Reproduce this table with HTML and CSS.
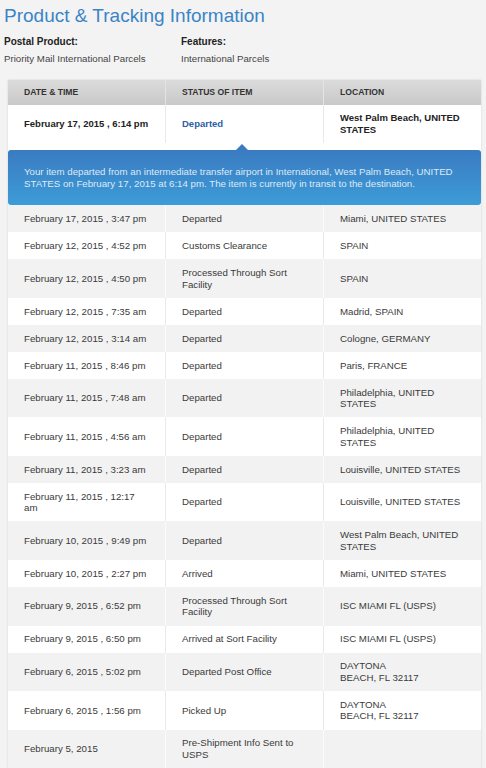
FILE: index.html
```html
<!DOCTYPE html>
<html>
<head>
<meta charset="utf-8">
<title>Product &amp; Tracking Information</title>
<link rel="stylesheet" href="styles.css">
</head>
<body>
<h1 class="title">Product &amp; Tracking Information</h1>
<div class="info">
  <div class="info-col">
    <div class="info-label">Postal Product:</div>
    <div class="info-value">Priority Mail International Parcels</div>
  </div>
  <div class="info-col">
    <div class="info-label">Features:</div>
    <div class="info-value">International Parcels</div>
  </div>
</div>
<table class="track">
  <colgroup><col class="c1"><col class="c2"><col class="c3"></colgroup>
  <thead>
    <tr><th>DATE &amp; TIME</th><th>STATUS OF ITEM</th><th>LOCATION</th></tr>
  </thead>
  <tbody class="current">
    <tr class="latest"><td>February 17, 2015 , 6:14 pm</td><td class="status">Departed</td><td>West Palm Beach, UNITED STATES</td></tr>
    <tr class="detail-row"><td colspan="3"><div class="detail"><span class="caret"></span>Your item departed from an intermediate transfer airport in International, West Palm Beach, UNITED STATES on February 17, 2015 at 6:14 pm. The item is currently in transit to the destination.</div></td></tr>
  </tbody>
  <tbody class="history">
    <tr><td>February 17, 2015 , 3:47 pm</td><td>Departed</td><td>Miami, UNITED STATES</td></tr>
    <tr><td>February 12, 2015 , 4:52 pm</td><td>Customs Clearance</td><td>SPAIN</td></tr>
    <tr><td>February 12, 2015 , 4:50 pm</td><td>Processed Through Sort Facility</td><td>SPAIN</td></tr>
    <tr><td>February 12, 2015 , 7:35 am</td><td>Departed</td><td>Madrid, SPAIN</td></tr>
    <tr><td>February 12, 2015 , 3:14 am</td><td>Departed</td><td>Cologne, GERMANY</td></tr>
    <tr><td>February 11, 2015 , 8:46 pm</td><td>Departed</td><td>Paris, FRANCE</td></tr>
    <tr><td>February 11, 2015 , 7:48 am</td><td>Departed</td><td>Philadelphia, UNITED STATES</td></tr>
    <tr><td>February 11, 2015 , 4:56 am</td><td>Departed</td><td>Philadelphia, UNITED STATES</td></tr>
    <tr><td>February 11, 2015 , 3:23 am</td><td>Departed</td><td>Louisville, UNITED STATES</td></tr>
    <tr><td>February 11, 2015 , 12:17 am</td><td>Departed</td><td>Louisville, UNITED STATES</td></tr>
    <tr><td>February 10, 2015 , 9:49 pm</td><td>Departed</td><td>West Palm Beach, UNITED STATES</td></tr>
    <tr><td>February 10, 2015 , 2:27 pm</td><td>Arrived</td><td>Miami, UNITED STATES</td></tr>
    <tr><td>February 9, 2015 , 6:52 pm</td><td>Processed Through Sort Facility</td><td>ISC MIAMI FL (USPS)</td></tr>
    <tr><td>February 9, 2015 , 6:50 pm</td><td>Arrived at Sort Facility</td><td>ISC MIAMI FL (USPS)</td></tr>
    <tr><td>February 6, 2015 , 5:02 pm</td><td>Departed Post Office</td><td>DAYTONA<br>BEACH, FL 32117</td></tr>
    <tr><td>February 6, 2015 , 1:56 pm</td><td>Picked Up</td><td>DAYTONA<br>BEACH, FL 32117</td></tr>
    <tr><td>February 5, 2015</td><td>Pre-Shipment Info Sent to USPS</td><td></td></tr>
  </tbody>
</table>
</body>
</html>
```

FILE: styles.css
```css
html, body {
  margin: 0;
  padding: 0;
}
body {
  background: #f3f3f3;
  font-family: "Liberation Sans", Arial, sans-serif;
  color: #3a3a3a;
  padding: 0 5px 0 4px;
  overflow: hidden;
}
.title {
  margin: 5px 0 0 0;
  font-size: 19px;
  line-height: 22px;
  font-weight: normal;
  color: #3b84c6;
}
.info {
  display: grid;
  grid-template-columns: 177px 1fr;
  margin-top: 7px;
  font-size: 9.7px;
  line-height: 16.7px;
}
.info-label {
  font-weight: bold;
  color: #222;
  font-size: 10px;
}
.info-value {
  color: #444;
}
.track {
  margin: 13px 0 0 4px;
  width: 473px;
  table-layout: fixed;
  border-collapse: separate;
  border-spacing: 0;
  background: #fff;
  box-shadow: 0 0 2px rgba(0, 0, 0, 0.14);
  font-size: 9.7px;
}
.c1 { width: 157px; }
.c2 { width: 158px; }
.c3 { width: 158px; }
.track th {
  text-align: left;
  font-size: 8.6px;
  font-weight: bold;
  color: #333;
  line-height: 11px;
  padding: 7px 16px 7px 16px;
  background: linear-gradient(#dbdbdb, #c9c9c9);
}
.track th + th {
  border-left: 1px solid #e4e4e4;
}
.track td {
  vertical-align: middle;
  text-align: left;
  padding: 7.7px 16px;
  line-height: 11.6px;
}
.track td + td {
  border-left: 1px solid #e9e9e9;
}
.latest td {
  font-weight: bold;
  font-size: 9.5px;
  color: #222;
  line-height: 12px;
  padding: 7px 12px 7px 16px;
}
.latest .status {
  color: #2c60a6;
}
.detail-row td {
  padding: 7px 0 0 0;
}
.detail {
  position: relative;
  border-radius: 3px;
  background: linear-gradient(#3a7bc1, #3d9cd7);
  color: #dceaf7;
  font-size: 9.7px;
  line-height: 12px;
  padding: 15.5px 12px 15.5px 16px;
}
.caret {
  position: absolute;
  top: -6px;
  left: 228px;
  width: 0;
  height: 0;
  border-left: 6px solid transparent;
  border-right: 6px solid transparent;
  border-bottom: 6px solid #3a7bc1;
}
.history tr:nth-child(odd) {
  background: #f2f2f2;
}
.history tr:nth-child(odd) td + td {
  border-left-color: #fbfbfb;
}
```
